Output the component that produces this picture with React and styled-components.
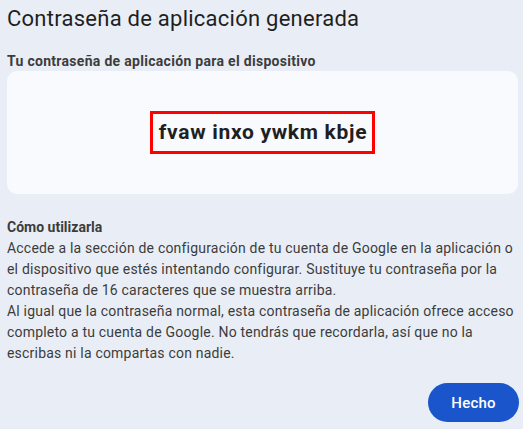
import React from "react";
import styled, { createGlobalStyle } from "styled-components";

const Global = createGlobalStyle`
  html, body { margin: 0; padding: 0; background: #e9eef6; }
  body { font-family: Roboto, "Noto Sans", Arial, sans-serif; color: #1f1f1f; }
`;

const Page = styled.div`
  width: 523px;
  height: 429px;
  box-sizing: border-box;
  padding: 4px 5px 0 7px;
  display: flex;
  flex-direction: column;
`;

const Title = styled.h1`
  margin: 0;
  font-size: 22px;
  font-weight: 400;
  line-height: 30px;
  letter-spacing: 0.25px;
  color: #1f1f1f;
`;

const Label = styled.div`
  margin-top: 19px;
  font-size: 14px;
  font-weight: 700;
  line-height: 16px;
  letter-spacing: 0.3px;
  color: #3c3c3c;
`;

const Card = styled.div`
  margin-top: 2px;
  height: 123px;
  background: #f8fafd;
  border-radius: 10px;
  display: flex;
  align-items: center;
  justify-content: center;
`;

const Password = styled.div`
  border: 3px solid #ff0000;
  padding: 6px 5px 6px 6px;
  font-size: 21px;
  font-weight: 700;
  line-height: 25px;
  color: #1f1f1f;
  letter-spacing: 0.7px;
`;

const Text = styled.div`
  padding-right: 4px;
`;

const Heading = styled.div`
  margin-top: 23px;
  font-size: 14px;
  font-weight: 700;
  line-height: 21px;
  color: #3c3c3c;
`;

const Para = styled.p`
  margin: 0;
  font-size: 14px;
  line-height: 21px;
  letter-spacing: 0.2px;
  color: #3c3c3c;
`;

const Footer = styled.div`
  margin-top: 19px;
  display: flex;
  justify-content: flex-end;
  margin-right: -1px;
`;

const Button = styled.button`
  width: 91px;
  height: 39px;
  border: none;
  border-radius: 20px;
  background: #1b55cc;
  color: #ffffff;
  font-family: Roboto, "Noto Sans", Arial, sans-serif;
  font-size: 15px;
  font-weight: 500;
  letter-spacing: 0.2px;
  cursor: pointer;
`;

export default function App() {
  return (
    <>
      <Global />
      <Page>
        <Title>Contraseña de aplicación generada</Title>
        <Label>Tu contraseña de aplicación para el dispositivo</Label>
        <Card>
          <Password>fvaw inxo ywkm kbje</Password>
        </Card>
        <Text>
          <Heading>Cómo utilizarla</Heading>
          <Para>
            Accede a la sección de configuración de tu cuenta de Google en la aplicación o el
            dispositivo que estés intentando configurar. Sustituye tu contraseña por la
            contraseña de 16 caracteres que se muestra arriba.
          </Para>
          <Para>
            Al igual que la contraseña normal, esta contraseña de aplicación ofrece acceso
            completo a tu cuenta de Google. No tendrás que recordarla, así que no la
            escribas ni la compartas con nadie.
          </Para>
        </Text>
        <Footer>
          <Button>Hecho</Button>
        </Footer>
      </Page>
    </>
  );
}
